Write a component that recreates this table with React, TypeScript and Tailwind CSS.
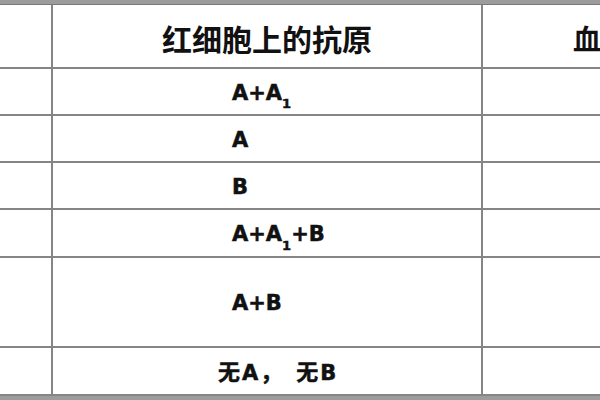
const sub = <sub className="text-[13px] align-[-5px]">1</sub>

const rows: { h: string; pad: string; content: React.ReactNode }[] = [
  { h: 'h-[47px]', pad: 'pl-[179px]', content: <>A+A{sub}</> },
  { h: 'h-[47px]', pad: 'pl-[179px]', content: 'A' },
  { h: 'h-[47px]', pad: 'pl-[179px]', content: 'B' },
  { h: 'h-[48px]', pad: 'pl-[179px]', content: <>A+A{sub}+B</> },
  { h: 'h-[90px]', pad: 'pl-[179px]', content: 'A+B' },
  {
    h: 'h-[48px]',
    pad: 'pl-[165px]',
    content: (
      <>
        <span className="text-[22px]">无</span>
        <span className="ml-[2px]">A</span>
        <span className="ml-[2px] text-[22px]">，</span>
        <span className="ml-[14px] text-[22px]">无</span>
        <span className="ml-[2px]">B</span>
      </>
    ),
  },
]

export default function App() {
  return (
    <div
      className="w-[600px] h-[400px] overflow-hidden bg-white text-[#111]"
      style={{ fontFamily: '"Noto Sans CJK SC", "Noto Sans", sans-serif' }}
    >
      <div className="h-[5px] bg-[#9c9c9c] border-b border-[#7a7a7a]" />
      <div className="flex h-[64px] border-b-2 border-[#858585]">
        <div className="w-[53px] shrink-0 border-r-2 border-[#858585]" />
        <div className="w-[430px] shrink-0 border-r-2 border-[#858585] flex items-center justify-center pt-[4px] text-[30px] font-bold">
          红细胞上的抗原
        </div>
        <div className="flex-1 flex items-center pl-[90px] pt-[4px] text-[28px] font-bold whitespace-nowrap">
          血
        </div>
      </div>
      {rows.map((r, i) => (
        <div key={i} className={`flex ${r.h} border-b-2 border-[#858585]`}>
          <div className="w-[53px] shrink-0 border-r-2 border-[#858585]" />
          <div
            className={`w-[430px] shrink-0 border-r-2 border-[#858585] flex items-center ${r.pad} pt-[4px] text-[21px] font-bold whitespace-nowrap [-webkit-text-stroke:0.5px_#111]`}
            style={{ fontFamily: '"DejaVu Sans", "Noto Sans CJK SC", sans-serif' }}
          >
            <span>{r.content}</span>
          </div>
          <div className="flex-1" />
        </div>
      ))}
      <div className="h-[6px] bg-[#9c9c9c]" />
    </div>
  )
}
